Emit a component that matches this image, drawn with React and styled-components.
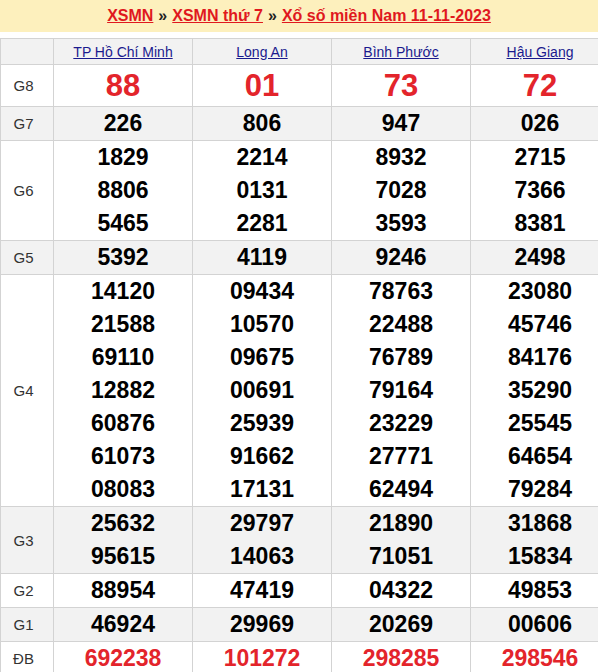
import React from "react";
import styled, { createGlobalStyle } from "styled-components";

const Global = createGlobalStyle`
  html, body { margin: 0; padding: 0; background: #fff; }
  body { font-family: "Liberation Sans", Arial, sans-serif; overflow: hidden; }
`;

const Page = styled.div`
  width: 609px;
`;

const TitleBar = styled.div`
  height: 32px;
  background: #fdf0bd;
  display: flex;
  align-items: center;
  justify-content: center;
  padding-right: 11px;
  font-size: 16px;
  font-weight: bold;
  color: #333;
  gap: 5px;
  margin-bottom: 6px;
`;

const TitleLink = styled.a`
  color: #e0181e;
  text-decoration: underline;
`;

const Sep = styled.span`
  color: #222;
`;

const Table = styled.table`
  width: 605px;
  border-collapse: collapse;
  table-layout: fixed;
`;

const Row = styled.tr`
  background: ${(p) => (p.$alt ? "#f2f2f2" : "#fff")};
`;

const HeadCell = styled.th`
  border: 1px solid #d3d3d3;
  height: 25px;
  padding: 0;
  font-weight: normal;
  font-size: 14px;
  text-align: center;
  vertical-align: middle;
  width: ${(p) => p.$w}px;
`;

const ProvinceLink = styled.a`
  color: #1a1a8e;
  text-decoration: underline;
`;

const LabelCell = styled.td`
  border: 1px solid #d3d3d3;
  padding: 0 7px 0 0;
  text-align: center;
  font-size: 15px;
  color: #333;
  vertical-align: middle;
`;

const NumCell = styled.td`
  border: 1px solid #d3d3d3;
  padding: 0;
  text-align: center;
  vertical-align: middle;
`;

const Num = styled.div`
  font-weight: bold;
  font-size: ${(p) => (p.$big ? "31px" : "23px")};
  line-height: ${(p) => (p.$big ? "41px" : "33px")};
  height: ${(p) => (p.$big ? "41px" : "33px")};
  color: ${(p) => (p.$red ? "#e3242b" : "#000")};
`;

const provinces = ["TP Hồ Chí Minh", "Long An", "Bình Phước", "Hậu Giang"];

const rows = [
  { label: "G8", big: true, red: true, data: [["88"], ["01"], ["73"], ["72"]] },
  { label: "G7", data: [["226"], ["806"], ["947"], ["026"]] },
  {
    label: "G6",
    data: [
      ["1829", "8806", "5465"],
      ["2214", "0131", "2281"],
      ["8932", "7028", "3593"],
      ["2715", "7366", "8381"],
    ],
  },
  { label: "G5", data: [["5392"], ["4119"], ["9246"], ["2498"]] },
  {
    label: "G4",
    data: [
      ["14120", "21588", "69110", "12882", "60876", "61073", "08083"],
      ["09434", "10570", "09675", "00691", "25939", "91662", "17131"],
      ["78763", "22488", "76789", "79164", "23229", "27771", "62494"],
      ["23080", "45746", "84176", "35290", "25545", "64654", "79284"],
    ],
  },
  {
    label: "G3",
    data: [
      ["25632", "95615"],
      ["29797", "14063"],
      ["21890", "71051"],
      ["31868", "15834"],
    ],
  },
  { label: "G2", data: [["88954"], ["47419"], ["04322"], ["49853"]] },
  { label: "G1", data: [["46924"], ["29969"], ["20269"], ["00606"]] },
  { label: "ĐB", red: true, data: [["692238"], ["101272"], ["298285"], ["298546"]] },
];

export default function App() {
  return (
    <Page>
      <Global />
      <TitleBar>
        <TitleLink href="#">XSMN</TitleLink>
        <Sep>»</Sep>
        <TitleLink href="#">XSMN thứ 7</TitleLink>
        <Sep>»</Sep>
        <TitleLink href="#">Xổ số miền Nam 11-11-2023</TitleLink>
      </TitleBar>
      <Table>
        <thead>
          <Row $alt>
            <HeadCell $w={52} />
            {provinces.map((p) => (
              <HeadCell key={p} $w={138}>
                <ProvinceLink href="#">{p}</ProvinceLink>
              </HeadCell>
            ))}
          </Row>
        </thead>
        <tbody>
          {rows.map((r, i) => (
            <Row key={r.label} $alt={i % 2 === 1}>
              <LabelCell>{r.label}</LabelCell>
              {r.data.map((col, j) => (
                <NumCell key={j}>
                  {col.map((n, k) => (
                    <Num key={k} $big={r.big} $red={r.red}>
                      {n}
                    </Num>
                  ))}
                </NumCell>
              ))}
            </Row>
          ))}
        </tbody>
      </Table>
    </Page>
  );
}
